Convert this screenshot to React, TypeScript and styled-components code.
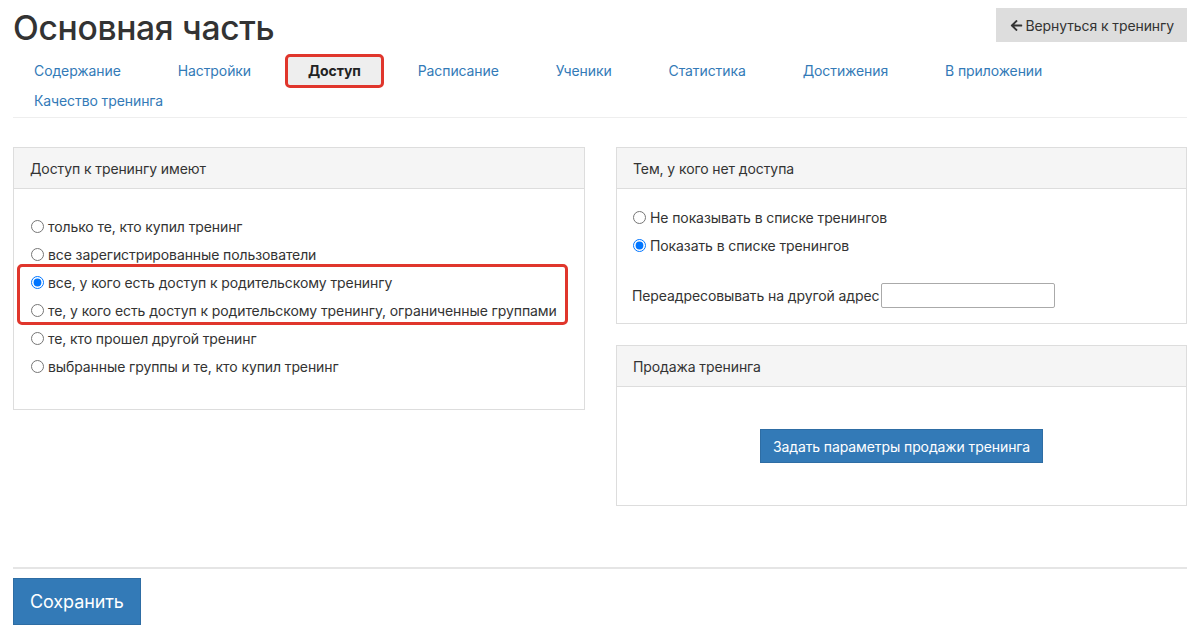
import * as React from 'react';
import styled, { createGlobalStyle } from 'styled-components';
import { FaArrowLeft } from 'react-icons/fa';

const GlobalStyle = createGlobalStyle`
  html, body {
    margin: 0;
    padding: 0;
    background: #fff;
  }
  body {
    font-family: Inter, 'Noto Sans', sans-serif;
    font-size: 14px;
    color: #333;
    letter-spacing: -0.1px;
  }
  * {
    box-sizing: border-box;
  }
`;

const Page = styled.div`
  width: 1200px;
  height: 634px;
  overflow: hidden;
  padding: 0 13px;
`;

const Header = styled.div`
  display: flex;
  justify-content: space-between;
  align-items: flex-start;
  padding-top: 8px;
`;

const Title = styled.h1`
  margin: 0;
  font-size: 33.6px;
  font-weight: 500;
  line-height: 40px;
  color: #333;
  letter-spacing: -0.3px;
`;

const BackButton = styled.button`
  display: flex;
  align-items: center;
  gap: 2px;
  height: 34px;
  padding: 0 13px 0 14px;
  border: none;
  background: #dddddd;
  color: #333;
  font-family: inherit;
  font-size: 14px;
  letter-spacing: -0.1px;
  cursor: pointer;
`;

const Tabs = styled.ul`
  display: flex;
  flex-wrap: wrap;
  list-style: none;
  margin: 8px 0 0;
  padding: 0 0 1px 1px;
  border-bottom: 1px solid #eee;
`;

const Tab = styled.li<{ active?: boolean }>`
  margin-right: 17px;
  height: 30px;
  display: flex;
  align-items: center;
  position: relative;

  a {
    display: block;
    padding: 0 20px;
    line-height: 28px;
    text-decoration: none;
    color: ${({ active }) => (active ? '#222' : '#337ab7')};
    font-weight: ${({ active }) => (active ? 700 : 400)};
    background: ${({ active }) => (active ? '#eeeeee' : 'transparent')};
    border-radius: 3px;
  }

  ${({ active }) =>
    active &&
    `
    &::after {
      content: '';
      position: absolute;
      left: -3px;
      right: -3px;
      top: -2px;
      bottom: -2px;
      border: 3px solid #e0362c;
      border-radius: 5px;
      pointer-events: none;
    }
  `}
`;

const Layout = styled.div`
  display: grid;
  grid-template-columns: 572px 571px;
  column-gap: 31px;
  margin-top: 29px;
  align-items: start;
`;

const Column = styled.div`
  display: flex;
  flex-direction: column;
  gap: 21px;
`;

const Panel = styled.div`
  border: 1px solid #ddd;
  background: #fff;
`;

const PanelHeading = styled.div`
  background: #f5f5f5;
  border-bottom: 1px solid #ddd;
  height: 41px;
  padding: 0 16px;
  display: flex;
  align-items: center;
  color: #333;
`;

const PanelBody = styled.div<{ pad: string }>`
  padding: ${({ pad }) => pad};
  position: relative;
`;

const RadioRow = styled.label`
  display: flex;
  align-items: center;
  height: 28px;
  cursor: pointer;

  input {
    margin: 0 4px 0 1px;
    width: 13px;
    height: 13px;
  }
`;

const Highlight = styled.div`
  position: absolute;
  left: 3px;
  width: 551px;
  top: 75px;
  height: 61px;
  border: 3px solid #e0362c;
  border-radius: 5px;
  pointer-events: none;
`;

const FieldRow = styled.div`
  display: flex;
  align-items: center;
  margin-top: 24px;
  gap: 2px;
`;

const TextInput = styled.input`
  width: 174px;
  height: 25px;
  border: 1px solid #aaa;
  border-radius: 2px;
  font-family: inherit;
  font-size: 14px;
`;

const Centered = styled.div`
  display: flex;
  justify-content: center;
`;

const PrimaryButton = styled.button<{ big?: boolean }>`
  background: #337ab7;
  border: 1px solid #2e6da4;
  color: #fff;
  font-family: inherit;
  font-size: ${({ big }) => (big ? '18px' : '14px')};
  letter-spacing: -0.1px;
  height: ${({ big }) => (big ? '47px' : '34px')};
  padding: ${({ big }) => (big ? '0 16px' : '0 12px')};
  cursor: pointer;
`;

const Footer = styled.div`
  margin-top: 61px;
  border-top: 2px solid #e5e5e5;
  padding-top: 9px;
`;

const accessOptions = [
  'только те, кто купил тренинг',
  'все зарегистрированные пользователи',
  'все, у кого есть доступ к родительскому тренингу',
  'те, у кого есть доступ к родительскому тренингу, ограниченные группами',
  'те, кто прошел другой тренинг',
  'выбранные группы и те, кто купил тренинг',
];

const tabs = [
  'Содержание',
  'Настройки',
  'Доступ',
  'Расписание',
  'Ученики',
  'Статистика',
  'Достижения',
  'В приложении',
  'Качество тренинга',
];

export default function App() {
  const [access, setAccess] = React.useState(2);
  const [visibility, setVisibility] = React.useState(1);

  return (
    <Page>
      <GlobalStyle />
      <Header>
        <Title>Основная часть</Title>
        <BackButton>
          <FaArrowLeft size={13} />
          Вернуться к тренингу
        </BackButton>
      </Header>

      <Tabs>
        {tabs.map((t) => (
          <Tab key={t} active={t === 'Доступ'}>
            <a href="#">{t}</a>
          </Tab>
        ))}
      </Tabs>

      <Layout>
        <Panel>
          <PanelHeading>Доступ к тренингу имеют</PanelHeading>
          <PanelBody pad="23px 16px 29px">
            {accessOptions.map((o, i) => (
              <RadioRow key={o}>
                <input
                  type="radio"
                  name="access"
                  checked={access === i}
                  onChange={() => setAccess(i)}
                />
                {o}
              </RadioRow>
            ))}
            <Highlight />
          </PanelBody>
        </Panel>

        <Column>
          <Panel>
            <PanelHeading>Тем, у кого нет доступа</PanelHeading>
            <PanelBody pad="14px 15px 15px">
              <RadioRow>
                <input
                  type="radio"
                  name="vis"
                  checked={visibility === 0}
                  onChange={() => setVisibility(0)}
                />
                Не показывать в списке тренингов
              </RadioRow>
              <RadioRow>
                <input
                  type="radio"
                  name="vis"
                  checked={visibility === 1}
                  onChange={() => setVisibility(1)}
                />
                Показать в списке тренингов
              </RadioRow>
              <FieldRow>
                Переадресовывать на другой адрес
                <TextInput type="text" />
              </FieldRow>
            </PanelBody>
          </Panel>

          <Panel>
            <PanelHeading>Продажа тренинга</PanelHeading>
            <PanelBody pad="42px 16px 42px">
              <Centered>
                <PrimaryButton>Задать параметры продажи тренинга</PrimaryButton>
              </Centered>
            </PanelBody>
          </Panel>
        </Column>
      </Layout>

      <Footer>
        <PrimaryButton big>Сохранить</PrimaryButton>
      </Footer>
    </Page>
  );
}
